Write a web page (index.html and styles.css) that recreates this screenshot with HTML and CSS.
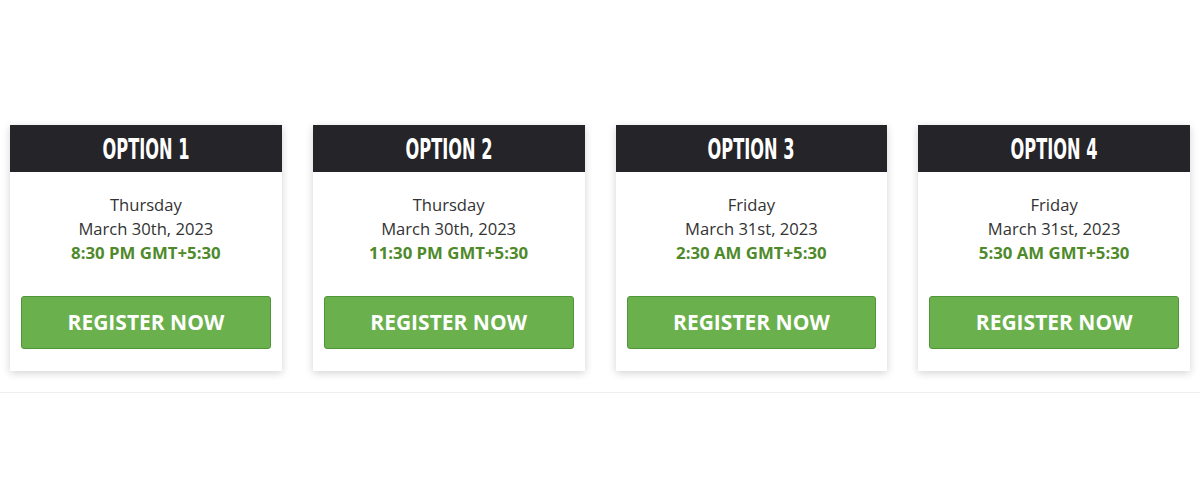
FILE: index.html
```html
<!DOCTYPE html>
<html lang="en">
<head>
  <meta charset="UTF-8">
  <meta name="viewport" content="width=device-width, initial-scale=1.0">
  <title>Webinar Options</title>
  <link rel="stylesheet" href="styles.css">
</head>
<body>
  <section class="options">
    <div class="card">
      <div class="card-head"><span>OPTION 1</span></div>
      <div class="card-body">
        <p class="day">Thursday</p>
        <p class="date">March 30th, 2023</p>
        <p class="time">8:30 PM GMT+5:30</p>
        <a class="register" href="#">REGISTER NOW</a>
      </div>
    </div>

    <div class="card">
      <div class="card-head"><span>OPTION 2</span></div>
      <div class="card-body">
        <p class="day">Thursday</p>
        <p class="date">March 30th, 2023</p>
        <p class="time">11:30 PM GMT+5:30</p>
        <a class="register" href="#">REGISTER NOW</a>
      </div>
    </div>

    <div class="card">
      <div class="card-head"><span>OPTION 3</span></div>
      <div class="card-body">
        <p class="day">Friday</p>
        <p class="date">March 31st, 2023</p>
        <p class="time">2:30 AM GMT+5:30</p>
        <a class="register" href="#">REGISTER NOW</a>
      </div>
    </div>

    <div class="card">
      <div class="card-head"><span>OPTION 4</span></div>
      <div class="card-body">
        <p class="day">Friday</p>
        <p class="date">March 31st, 2023</p>
        <p class="time">5:30 AM GMT+5:30</p>
        <a class="register" href="#">REGISTER NOW</a>
      </div>
    </div>
  </section>
</body>
</html>
```

FILE: styles.css
```css
body {
  margin: 0;
  background-color: #ffffff;
  font-family: "Open Sans", Arial, sans-serif;
  color: #333;
}
.options {
  display: flex;
  gap: 31px;
  padding: 125px 10px 21px;
  border-bottom: 1px solid #eeeeee;
}
.card {
  flex: 1;
  background-color: #fff;
  box-shadow: 0 2px 8px rgba(0, 0, 0, 0.18);
}
.card-head {
  height: 47px;
  background-color: #252428;
  color: #fff;
  display: flex;
  justify-content: center;
  align-items: center;
}
.card-head span {
  display: inline-block;
  font-family: "Liberation Sans Narrow", "DejaVu Sans Condensed", sans-serif;
  font-weight: bold;
  font-size: 29px;
  transform: scaleX(0.62);
  line-height: 1;
  margin-top: 2px;
}
.card-body {
  padding: 21px 11px 22px;
  text-align: center;
}
.card-body p {
  margin: 0;
  font-size: 16.6px;
  line-height: 24px;
}
.card-body .time {
  color: #4e8a2a;
  font-weight: bold;
  font-size: 16.8px;
}
.register {
  display: block;
  margin-top: 31px;
  height: 53px;
  line-height: 51px;
  box-sizing: border-box;
  background-color: #6ab04c;
  border: 1px solid #4f9638;
  border-radius: 3px;
  color: #fff;
  font-size: 21px;
  font-weight: bold;
  text-decoration: none;
}
.register:hover {
  background-color: #5c9c41;
}
```
